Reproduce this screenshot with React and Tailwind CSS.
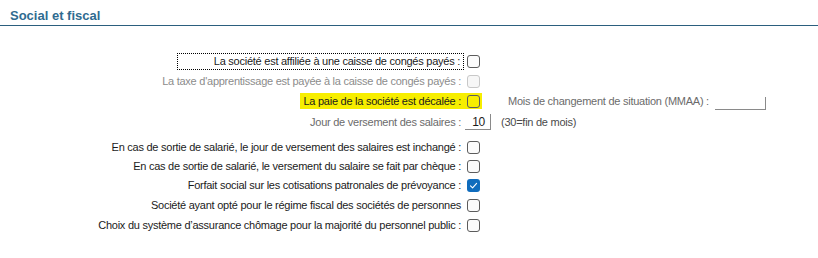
import React from 'react';

const font = { fontFamily: '"Liberation Sans", Arial, sans-serif' };

const Box = ({ checked, disabled, yellow }) => {
  if (checked) {
    return (
      <span className="w-[13px] h-[13px] rounded-[3px] bg-[#0f6cbd] flex items-center justify-center">
        <svg width="9" height="9" viewBox="0 0 9 9" fill="none">
          <path d="M1.5 4.8 L3.6 6.8 L7.6 2.3" stroke="white" strokeWidth="1.1" strokeLinecap="round" strokeLinejoin="round" />
        </svg>
      </span>
    );
  }
  return (
    <span
      className={
        'w-[13px] h-[13px] rounded-[3px] border ' +
        (disabled
          ? 'border-[#c8c8c8] bg-[#f7f7f7]'
          : yellow
          ? 'border-[#5c5c5c] bg-[#f7ee00]'
          : 'border-[#5c5c5c] bg-[#fbfbfb]')
      }
    />
  );
};

const Row = ({ label, className = '', textClass = 'text-[#1b1b1b]', children }) => (
  <div className={'flex items-center ' + className}>
    <div className={'w-[465px] text-right pr-[4px] shrink-0 ' + textClass}>{label}</div>
    {children}
  </div>
);

export default function App() {
  return (
    <div className="w-[818px] h-[258px] bg-white text-[11px] tracking-[-0.25px] leading-none" style={font}>
      <div className="h-[26px] border-b border-[#2b5f7e] flex items-end pl-[10px] pb-[3px]">
        <span className="text-[13px] tracking-normal font-bold text-[#2f6b90]">Social et fiscal</span>
      </div>

      <div className="pt-[25px] flex flex-col">
        <Row
          label={
            <span className="inline-block w-[281px] outline-1 outline-dotted outline-black outline-offset-[2px] pr-[1px]">
              La société est affiliée à une caisse de congés payés :
            </span>
          }
          className="h-[20px]"
        >
          <div className="pl-[2px] flex"><Box /></div>
        </Row>
        <Row label="La taxe d'apprentissage est payée à la caisse de congés payés :" textClass="text-[#8c8c8c]" className="h-[20px]">
          <div className="pl-[2px] flex"><Box disabled /></div>
        </Row>
        <div className="flex items-center h-[20px]">
          <div className="w-[465px] shrink-0 flex justify-end">
            <span className="bg-[#f7ee00] h-[16px] flex items-center pl-[3px] pr-[4px] text-[#1b1b1b]">La paie de la société est décalée :</span>
          </div>
          <div className="bg-[#f7ee00] h-[16px] flex items-center pl-[2px] pr-[2px]"><Box yellow /></div>
          <span className="ml-[26px] w-[207px] text-[#6b6b6b]">Mois de changement de situation (MMAA) :</span>
          <div className="w-[51px] h-[13px] border-b border-r border-[#8a8a8a] self-end mb-[1px]" />
        </div>
        <Row label="Jour de versement des salaires :" textClass="text-[#6b6b6b]" className="h-[22px]">
          <div className="w-[26px] h-[16px] border-b border-r border-[#8a8a8a] flex items-center justify-end pr-[5px] text-[#1b1b1b] text-[12px]">10</div>
          <span className="ml-[10px] text-[#4a4a4a]">(30=fin de mois)</span>
        </Row>
        <div className="h-[4px]" />
        <Row label="En cas de sortie de salarié, le jour de versement des salaires est inchangé :" className="h-[20px]">
          <div className="pl-[2px] flex"><Box /></div>
        </Row>
        <Row label="En cas de sortie de salarié, le versement du salaire se fait par chèque :" className="h-[19px]">
          <div className="pl-[2px] flex"><Box /></div>
        </Row>
        <Row label="Forfait social sur les cotisations patronales de prévoyance :" className="h-[19px]">
          <div className="pl-[2px] flex"><Box checked /></div>
        </Row>
        <Row label="Société ayant opté pour le régime fiscal des sociétés de personnes" className="h-[20px]">
          <div className="pl-[2px] flex"><Box /></div>
        </Row>
        <Row label="Choix du système d’assurance chômage pour la majorité du personnel public :" className="h-[20px]">
          <div className="pl-[2px] flex"><Box /></div>
        </Row>
      </div>
    </div>
  );
}
